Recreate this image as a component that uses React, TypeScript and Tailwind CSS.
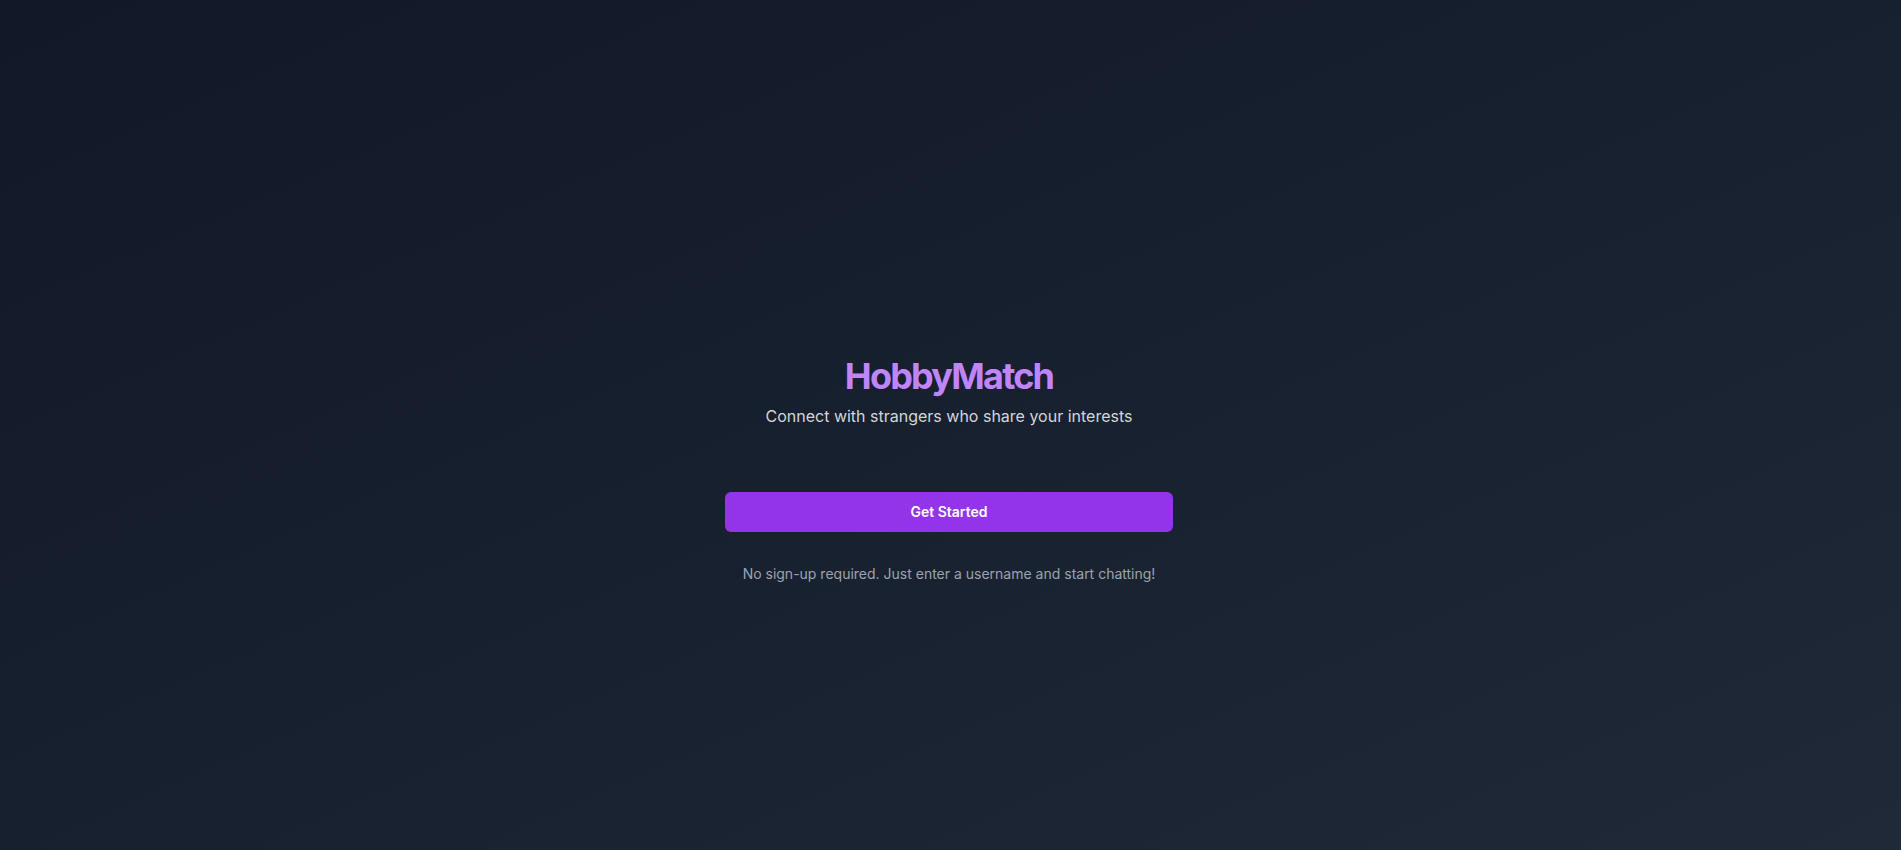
export default function App() {
  return (
    <div className="flex min-h-screen flex-col items-center justify-center bg-gradient-to-br from-[#111827] to-[#1f2937] pl-4 pr-[19px] pt-[90px] font-['Inter','Noto_Sans',sans-serif]">
      <div className="w-full max-w-md text-center">
        <h1 className="text-4xl font-bold tracking-tighter text-[#c084fc]">HobbyMatch</h1>
        <p className="mt-2 text-base text-[#d1d5db]">Connect with strangers who share your interests</p>

        <button
          type="button"
          className="mt-16 w-full rounded-md bg-[#9333ea] py-2.5 text-sm font-semibold text-white hover:bg-[#7e22ce]"
        >
          Get Started
        </button>

        <p className="mt-8 text-sm text-[#9ca3af]">No sign-up required. Just enter a username and start chatting!</p>
      </div>
    </div>
  );
}
